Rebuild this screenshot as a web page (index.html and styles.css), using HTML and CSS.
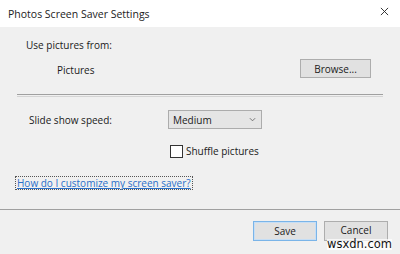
FILE: index.html
```html
<!DOCTYPE html>
<html lang="en">
<head>
  <meta charset="UTF-8">
  <title>Photos Screen Saver Settings</title>
  <link rel="stylesheet" href="styles.css">
</head>
<body>
  <div class="dialog">
    <div class="titlebar">
      <span class="title">Photos Screen Saver Settings</span>
      <svg class="close-icon" viewBox="0 0 10 10" fill="none" stroke="#222" stroke-width="1">
        <path d="M1 1L9 9M9 1L1 9"/>
      </svg>
    </div>

    <div class="content">
      <div class="source-label">Use pictures from:</div>
      <div class="source-row">
        <span class="source-name">Pictures</span>
        <button class="btn">Browse...</button>
      </div>

      <div class="separator"></div>

      <div class="speed-row">
        <span class="speed-label">Slide show speed:</span>
        <div class="select">
          <span>Medium</span>
          <svg class="chevron" viewBox="0 0 8 5" fill="none" stroke="#666" stroke-width="1">
            <path d="M1 1L4 4L7 1"/>
          </svg>
        </div>
      </div>

      <label class="check-row">
        <span class="checkbox"></span>
        <span>Shuffle pictures</span>
      </label>

      <a class="help-link" href="#">How do I customize my screen saver?</a>
    </div>

    <div class="footer">
      <button class="btn btn-default">Save</button>
      <button class="btn btn-cancel">Cancel</button>
    </div>

    <div class="watermark">wsxdn.com</div>
  </div>
</body>
</html>
```

FILE: styles.css
```css
body {
  margin: 0;
  font-family: "Open Sans", "Noto Sans", sans-serif;
  font-size: 10px;
  color: #1a1a1a;
  background-color: #f0f0f0;
}
.dialog {
  position: relative;
  width: 400px;
  height: 254px;
  background-color: #f0f0f0;
  overflow: hidden;
}
.titlebar {
  height: 27px;
  background-color: #fff;
  display: flex;
  align-items: center;
  justify-content: space-between;
  padding: 0 11px 0 8px;
}
.title {
  font-size: 10.5px;
  color: #222;
}
.close-icon {
  width: 9px;
  height: 9px;
  margin-top: -4px;
}
.content {
  padding: 0 17px;
}
.source-label {
  margin-top: 10px;
  padding-left: 9px;
  line-height: 16px;
}
.source-row {
  display: flex;
  align-items: center;
  justify-content: space-between;
  margin-top: 6px;
  padding-left: 40px;
  padding-right: 12px;
}
.source-name {
  padding-top: 3px;
}
.btn {
  font-family: inherit;
  font-size: 10px;
  color: #1a1a1a;
  background-color: #e1e1e1;
  border: 1px solid #adadad;
  padding: 0;
  height: 19px;
  width: 71px;
}
.separator {
  margin-top: 16px;
  height: 1px;
  border-top: 1px solid #a0a0a0;
  border-bottom: 1px solid #d4d4d4;
}
.speed-row {
  display: flex;
  align-items: center;
  margin-top: 13px;
  padding-left: 12px;
}
.speed-label {
  width: 139px;
}
.select {
  display: flex;
  align-items: center;
  justify-content: space-between;
  box-sizing: border-box;
  width: 94px;
  height: 19px;
  padding: 0 5px 0 4px;
  background-color: #e5e5e5;
  border: 1px solid #acacac;
}
.chevron {
  width: 7px;
  height: 5px;
}
.check-row {
  display: flex;
  align-items: center;
  gap: 3px;
  margin-top: 15px;
  margin-left: 153px;
  height: 14px;
}
.checkbox {
  width: 11px;
  height: 11px;
  border: 1px solid #333;
  background-color: #fff;
}
.help-link {
  display: inline-block;
  margin-top: 19px;
  margin-left: -1px;
  padding: 0 1px;
  height: 12px;
  line-height: 12px;
  color: #2a6fc9;
  outline: 1px dotted #555;
}
.footer {
  display: flex;
  justify-content: flex-end;
  gap: 7px;
  margin-top: 19px;
  padding: 11px 12px 0 0;
  border-top: 1px solid #a0a0a0;
}
.footer .btn {
  width: 64px;
  height: 20px;
}
.btn-cancel {
  line-height: 12px;
  padding-bottom: 3px;
}
.btn-default {
  border: 1px solid #7ab4e8;
  box-shadow: inset 0 0 0 1px #c6def5;
}
.watermark {
  position: absolute;
  left: 327px;
  top: 239px;
  font-family: "DejaVu Sans", sans-serif;
  font-size: 11.5px;
  line-height: 11px;
  color: #111;
  background-color: rgba(255, 255, 255, 0.7);
}
```
